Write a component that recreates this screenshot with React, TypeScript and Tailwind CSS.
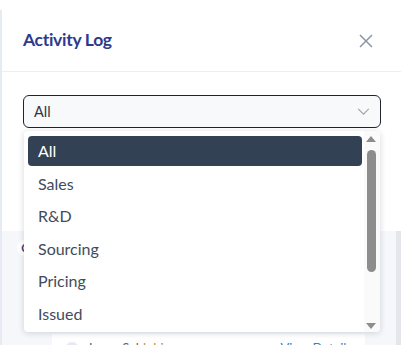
import React from 'react';

const options = ['All', 'Sales', 'R&D', 'Sourcing', 'Pricing', 'Issued'];

function Chevron({ className }: { className?: string }) {
  return (
    <svg className={className} viewBox="0 0 14 8" fill="none" stroke="currentColor" strokeWidth="1.3">
      <path d="M1 1l6 6 6-6" />
    </svg>
  );
}

export default function App() {
  const selected = 'All';

  return (
    <div className="relative w-[401px] h-[345px] overflow-hidden bg-white font-['Lato','Liberation_Sans',sans-serif]">
      <div className="mt-[10px] h-[335px] flex flex-col border-l-2 border-[#e6eaf3]">
        {/* Header */}
        <div className="h-[62px] shrink-0 flex items-center justify-between pl-[21px] pr-[28px] border-b border-[#efefef]">
          <h2 className="text-[17.5px] font-bold text-[#2c3a8c] tracking-[-0.3px]">Activity Log</h2>
          <button className="text-[#8c95a6]">
            <svg width="14" height="14" viewBox="0 0 14 14" stroke="currentColor" strokeWidth="1.5">
              <path d="M1 1l12 12M13 1L1 13" />
            </svg>
          </button>
        </div>

        {/* Filter */}
        <div className="h-[159px] shrink-0 pl-[21px] pr-[20px] pt-[23px]">
          <div className="relative">
            <div className="h-[33px] flex items-center justify-between rounded-[6px] border border-[#1f2430] bg-[#f8f9fb] pl-[10px] pr-[10px]">
              <span className="text-[14.5px] text-[#2f3747]">{selected}</span>
              <Chevron className="w-[13px] h-[7px] text-[#9ba3b4]" />
            </div>

            {/* Open listbox */}
            <div className="absolute z-10 left-[1px] right-[1px] top-full mt-[3px] h-[201px] flex rounded-[4px] bg-white shadow-[0_1px_6px_rgba(30,40,70,0.18)]">
              <ul className="flex-1 pl-[4px] pr-[2px] pt-[5px]">
                {options.map((o) => (
                  <li
                    key={o}
                    className={
                      o === selected
                        ? 'h-[30px] mb-[2.6px] flex items-center pl-[10px] rounded-[4px] bg-[#334155] text-white text-[16px]'
                        : 'h-[30px] mb-[2.6px] flex items-center pl-[10px] text-[#424b5c] text-[16px]'
                    }
                  >
                    {o}
                  </li>
                ))}
              </ul>
              <div className="w-[16px] shrink-0 flex flex-col items-center bg-[#fafafa] pr-[2px] pt-[5px] pb-[3px] rounded-r-[4px]">
                <div className="w-0 h-0 border-l-[5px] border-r-[5px] border-b-[6px] border-l-transparent border-r-transparent border-b-[#8d8d8d]" />
                <div className="mt-[8px] w-[9px] h-[122px] rounded-full bg-[#8d8d8d]" />
                <div className="mt-auto w-0 h-0 border-l-[5px] border-r-[5px] border-t-[6px] border-l-transparent border-r-transparent border-t-[#8d8d8d]" />
              </div>
            </div>
          </div>
        </div>

        {/* Timeline behind */}
        <div className="flex-1 flex bg-[#f5f7fa]">
          <div className="flex-1 relative pl-[15px] pt-[9px]">
            <div className="w-[16px] h-[16px] rounded-full bg-white flex items-center justify-center text-[11px] font-bold text-[#2e3a8a]">
              C
            </div>
            <div className="ml-[35px] mr-[31px] mt-[78px] h-[40px] bg-white px-[13px] pt-[5px] flex items-start justify-between">
              <div className="flex items-center gap-[8px]">
                <div className="w-[14px] h-[14px] rounded-full bg-[#e6e8f5] flex items-center justify-center text-[9px] font-bold text-[#2e3a8a]">J</div>
                <span className="text-[13px] text-[#5b6475]">Jason Sal<span className="text-[#c48a3f]">dubi</span></span>
              </div>
              <span className="text-[13px] text-[#3b82c4]">View Details</span>
            </div>
          </div>
          <div className="w-[5px] shrink-0 bg-[#e4e6eb]" />
        </div>
      </div>
    </div>
  );
}
